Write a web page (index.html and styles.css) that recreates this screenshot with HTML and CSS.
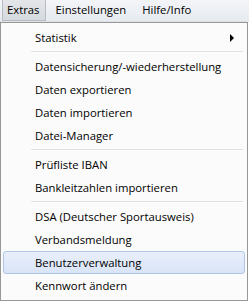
FILE: index.html
```html
<!DOCTYPE html>
<html lang="de">
<head>
    <meta charset="UTF-8">
    <title>Extras</title>
    <link rel="stylesheet" href="styles.css">
</head>
<body>
    <div class="menuleiste">
        <span class="menupunkt aktiv">Extras</span>
        <span class="menupunkt">Einstellungen</span>
        <span class="menupunkt">Hilfe/Info</span>
    </div>
    <ul class="aufklapp">
        <li class="eintrag untermenu">Statistik <span class="pfeil"></span></li>
        <li class="trenner"></li>
        <li class="eintrag">Datensicherung/-wiederherstellung</li>
        <li class="eintrag">Daten exportieren</li>
        <li class="eintrag">Daten importieren</li>
        <li class="eintrag">Datei-Manager</li>
        <li class="trenner"></li>
        <li class="eintrag">Prüfliste IBAN</li>
        <li class="eintrag">Bankleitzahlen importieren</li>
        <li class="trenner"></li>
        <li class="eintrag">DSA (Deutscher Sportausweis)</li>
        <li class="eintrag">Verbandsmeldung</li>
        <li class="eintrag markiert">Benutzerverwaltung</li>
        <li class="eintrag">Kennwort ändern</li>
    </ul>
</body>
</html>
```

FILE: styles.css
```css
body {
    margin: 0;
    font-family: "Open Sans", "Noto Sans", sans-serif;
    font-size: 11.3px;
    color: #000;
    background: #fff;
}
.menuleiste {
    display: flex;
    height: 21px;
    padding-left: 2px;
    background: linear-gradient(#f3f5f8, #e6eaef);
    border-bottom: 1px solid #dfe3e8;
}
.menupunkt {
    display: flex;
    align-items: center;
    padding: 0 6px;
    height: 19px;
    margin-right: 4px;
}
.menupunkt.aktiv {
    background: linear-gradient(#e4e6ea, #d6d9de);
    border: 1px solid #b7bbc2;
    border-top: none;
    padding: 0 5px 1px 4px;
}
.aufklapp {
    list-style: none;
    margin: 0;
    width: 242px;
    padding: 3px 2px;
    background: #fbfbfb;
    border: 1px solid #979797;
}
.eintrag {
    display: flex;
    align-items: center;
    height: 23px;
    padding-left: 31px;
    border: 1px solid transparent;
    box-sizing: border-box;
}
.untermenu {
    justify-content: space-between;
    padding-right: 10px;
}
.pfeil {
    width: 0;
    height: 0;
    border-top: 4px solid transparent;
    border-bottom: 4px solid transparent;
    border-left: 4px solid #000;
}
.markiert {
    background: linear-gradient(#e9effb, #d9e4f7);
    border-color: #b0c4e8;
    border-radius: 3px;
}
.trenner {
    height: 1px;
    margin: 2px 2px 2px 28px;
    background: #e0e0e0;
    border-bottom: 1px solid #fff;
}
```
